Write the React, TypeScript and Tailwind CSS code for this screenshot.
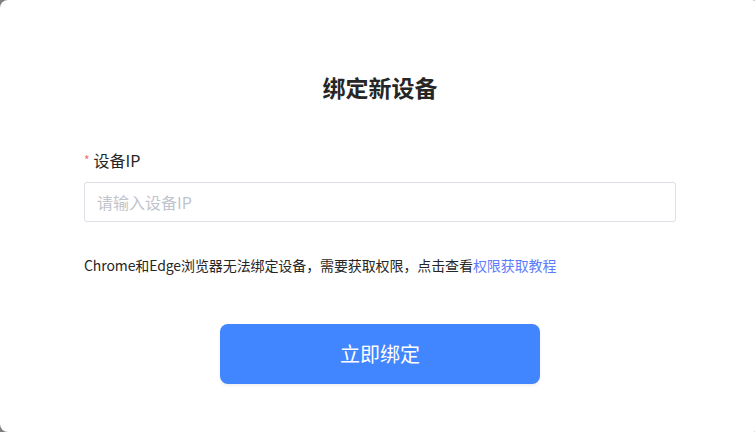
export default function App() {
  return (
    <div
      className="h-[432px] w-[755px] overflow-hidden bg-[#7f7f7f]"
      style={{ fontFamily: '"Noto Sans CJK SC", "Noto Sans", sans-serif' }}
    >
      <div className="flex h-[432px] w-[760px] flex-col rounded-lg bg-white px-[84px] pt-[70px]">
        <h2 className="text-center text-[23px] font-bold leading-[34px] text-[#262626]">绑定新设备</h2>
        <div className="mt-[44px] flex items-center text-[16px] leading-[24px] text-[#262626]">
          <span className="mr-[4px] text-[12px] text-[#f56c6c]">*</span>
          设备IP
        </div>
        <input
          className="mt-[10px] h-[40px] w-full rounded-[3px] border border-[#dcdfe6] px-[12px] text-[16px] text-[#262626] outline-none placeholder:text-[#c0c4cc]"
          placeholder="请输入设备IP"
        />
        <p className="mt-[33px] text-[14px] leading-[20px] tracking-[-0.1px] text-[#262626]">
          Chrome和Edge浏览器无法绑定设备，需要获取权限，点击查看
          <a className="text-[#607cfb]" href="#">权限获取教程</a>
        </p>
        <div className="mt-[49px] flex justify-center">
          <button className="h-[60px] w-[320px] rounded-[8px] bg-[#4186fe] text-[20px] text-white shadow-[0_2px_3px_rgba(0,0,0,0.06)]">
            立即绑定
          </button>
        </div>
      </div>
    </div>
  );
}
